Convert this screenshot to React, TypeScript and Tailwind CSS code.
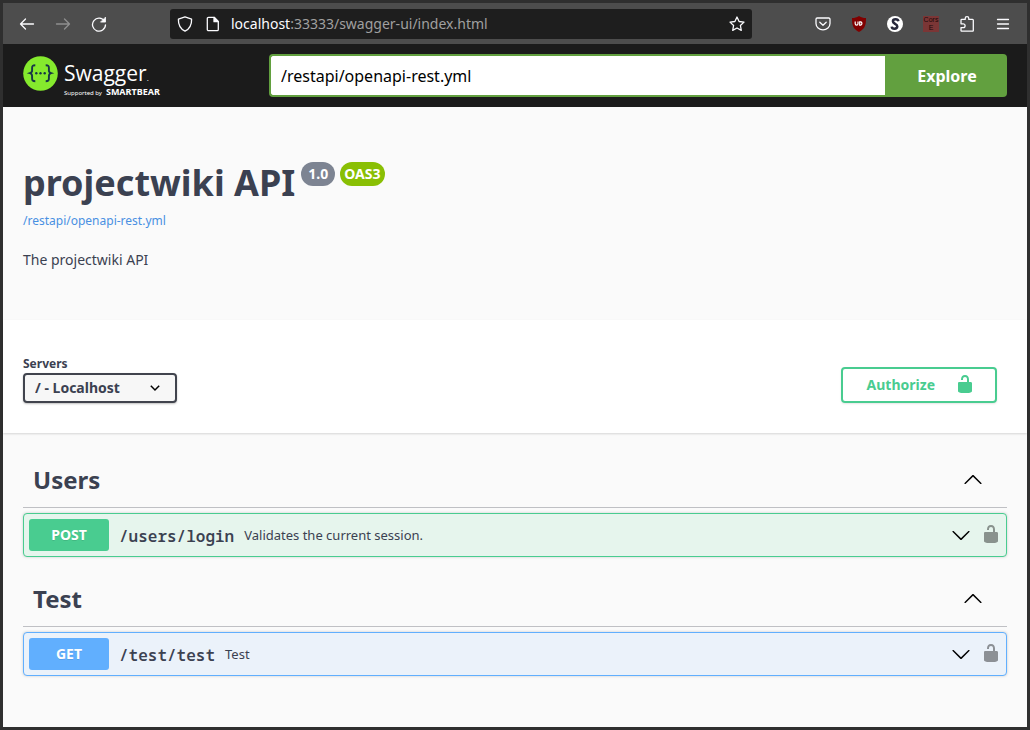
import type { ReactNode } from 'react';

const paths = {
  unlocked:
    'M15.8 8H14V5.6C14 2.703 12.665 1 10 1 7.334 1 6 2.703 6 5.6V6h2v-.801C8 3.754 8.797 3 10 3c1.203 0 2 .754 2 2.199V8H4c-.553 0-1 .646-1 1.199V17c0 .549.428 1.139.951 1.307l1.197.387C5.672 18.861 6.55 19 7.1 19h5.8c.549 0 1.428-.139 1.951-.307l1.196-.387c.524-.167.953-.757.953-1.306V9.199C17 8.646 16.352 8 15.8 8z',
  up: 'M17.418 14.908c.272.268.709.268.979 0s.271-.701 0-.969l-7.908-7.83c-.27-.268-.707-.268-.979 0l-7.908 7.83c-.27.268-.27.701 0 .969.271.268.709.268.979 0L10 7.767l7.418 7.141z',
  down: 'M17.418 6.109c.272-.268.709-.268.979 0s.271.701 0 .969l-7.908 7.83c-.27.268-.707.268-.979 0l-7.908-7.83c-.27-.268-.27-.701 0-.969.271-.268.709-.268.979 0L10 13.25l7.418-7.141z',
};

function Glyph({ d, className = '' }: { d: string; className?: string }) {
  return (
    <svg viewBox="0 0 20 20" className={`size-5 shrink-0 ${className}`} fill="currentColor" aria-hidden="true">
      <path d={d} />
    </svg>
  );
}

function ToolButton({ label, dim, children }: { label: string; dim?: boolean; children: ReactNode }) {
  return (
    <button
      type="button"
      aria-label={label}
      className={`flex size-9 items-center justify-center ${dim ? 'text-[#8f8f8f]' : 'text-[#fbfbfe]'}`}
    >
      {children}
    </button>
  );
}

function Line({ children }: { children: ReactNode }) {
  return (
    <svg
      viewBox="0 0 16 16"
      className="size-4 shrink-0"
      fill="none"
      stroke="currentColor"
      strokeWidth="1.3"
      strokeLinecap="round"
      strokeLinejoin="round"
      aria-hidden="true"
    >
      {children}
    </svg>
  );
}

function BrowserBar() {
  return (
    <header className="flex h-[41px] items-center bg-[#4d4d4d] px-1.5">
      <nav className="flex">
        <ToolButton label="Back">
          <Line>
            <path d="M14.5 8H1.5M6.5 3 1.5 8l5 5" />
          </Line>
        </ToolButton>
        <ToolButton label="Forward" dim>
          <Line>
            <path d="M1.5 8h13M9.500 3l5 5-5 5" />
          </Line>
        </ToolButton>
        <ToolButton label="Reload">
          <Line>
            <path d="M13.500 5.200A6.500 6.500 0 1 0 14.500 8.800" />
            <path d="M14.500 1.500v4.600H9.900z" fill="currentColor" strokeWidth="0.800" />
          </Line>
        </ToolButton>
      </nav>
      <div className="mx-[53px] flex h-[30px] min-w-0 flex-1 items-center rounded-[3px] bg-[#1e1e1e] px-[7px] text-[#fbfbfe]">
        <Line>
          <path d="M8 .8 14.600 3.200C14.800 8.500 13 12.600 8 15.200 3 12.600 1.200 8.500 1.400 3.200z" />
        </Line>
        <span className="ml-3 flex">
          <Line>
            <path d="M3.500 1.300h5.700l4.100 4.100v8.100a1.200 1.200 0 0 1-1.200 1.200H3.500a1.200 1.200 0 0 1-1.200-1.200v-11a1.200 1.200 0 0 1 1.200-1.200z" />
            <path d="M9 1.500v4.200h4.200z" fill="currentColor" />
          </Line>
        </span>
        <div className="ml-2.5 min-w-0 flex-1 text-[14px] leading-5 whitespace-nowrap text-[#a0a0a0]">
          <span className="text-[#fbfbfe]">localhost</span>:33333/swagger-ui/index.html
        </div>
        <button type="button" aria-label="Bookmark">
          <Line>
            <path d="m8 1 2.100 4.500 4.900.6-3.600 3.400.9 4.900L8 12l-4.300 2.400.9-4.900L1 6.100l4.900-.6z" />
          </Line>
        </button>
      </div>
      <div className="flex">
        <ToolButton label="Pocket">
          <Line>
            <path d="M2.200 2h11.600a1.200 1.200 0 0 1 1.200 1.200V7.500a7 6.300 0 0 1-14 0V3.200A1.200 1.200 0 0 1 2.200 2z" />
            <path d="m4.800 6.200 3.200 3 3.200-3" />
          </Line>
        </ToolButton>
        <ToolButton label="uBlock">
          <svg viewBox="0 0 16 16" className="size-4" aria-hidden="true">
            <path d="M8 0c2.500 1.600 4.200 2 7 2 0 7-.7 10.500-7 14C1.700 12.500 1 9 1 2c2.800 0 4.500-.4 7-2z" fill="#800000" />
            <path
              d="M4.200 5.400v2.300a1.400 1.400 0 0 0 2.800 0V5.400M8.700 5.900h1.100a1.700 1.700 0 0 1 0 3.200H8.700z"
              fill="none"
              stroke="#fff"
              strokeWidth="1.200"
            />
          </svg>
        </ToolButton>
        <ToolButton label="Stylus">
          <svg viewBox="0 0 16 16" className="size-4" aria-hidden="true">
            <circle cx="8" cy="8" r="8" fill="#fff" />
            <path
              d="M11.400 5.200C11 2.600 6 2.600 5.900 5.300 5.800 7.900 10.400 7.700 10.300 10.400 10.100 13.400 5 13.400 4.700 10.600"
              fill="none"
              stroke="#27283c"
              strokeWidth="2.500"
            />
          </svg>
        </ToolButton>
        <ToolButton label="Cors">
          <span className="flex size-4 flex-col items-center justify-center bg-[#7b3636] font-['Liberation_Sans',sans-serif] text-[7px] leading-[8px] text-[#1c0808]">
            <span>Cors</span>
            <span>E</span>
          </span>
        </ToolButton>
        <ToolButton label="Extensions">
          <Line>
            <path d="M2 6.800V4.200a.8.8 0 0 1 .8-.8H6.200V2.500a1.800 1.800 0 0 1 3.600 0v.9h3.700a.8.8 0 0 1 .8.8v10.200a.8.8 0 0 1-.8.800H2.800a.8.8 0 0 1-.8-.8v-2.800h2.200a1.900 1.900 0 0 0 0-3.800H2z" />
          </Line>
        </ToolButton>
        <ToolButton label="Menu">
          <Line>
            <path d="M2.500 3.500h11M2.500 8h11M2.500 12.500h11" />
          </Line>
        </ToolButton>
      </div>
    </header>
  );
}

function Logo() {
  return (
    <a href="#" className="flex h-full flex-1 items-start gap-1.5 pt-3 text-white">
      <svg viewBox="0 0 35 35" className="size-[35px] shrink-0" aria-hidden="true">
        <circle cx="17.500" cy="17.500" r="17.300" fill="#85ea2d" />
        <g fill="none" stroke="#173647" strokeWidth="1.900">
          <path d="M12.300 9.200c-2.600 0-3.300.7-3.200 3 .1 3 .1 4.300-2.200 5 2.300.7 2.300 2 2.200 5-.1 2.300.6 3 3.200 3" />
          <path d="M22.700 9.200c2.600 0 3.300.7 3.200 3-.1 3-.1 4.300 2.200 5-2.300.7-2.300 2-2.200 5 .1 2.300-.6 3-3.200 3" />
        </g>
        <g fill="#173647">
          <circle cx="13.300" cy="17.200" r="1.200" />
          <circle cx="17.500" cy="17.200" r="1.200" />
          <circle cx="21.700" cy="17.200" r="1.200" />
        </g>
      </svg>
      <span className="flex flex-col">
        <span className="font-['Open_Sans',sans-serif] text-[21px] leading-[34px]">
          Swagger<span className="text-[8px]">.</span>
        </span>
        <span className="-mt-[7px] flex items-baseline gap-1 text-[6px] leading-2 whitespace-nowrap">
          Supported by <span className="text-[9px] font-bold">SMARTBEAR</span>
        </span>
      </span>
    </a>
  );
}

function TopBar() {
  return (
    <div className="flex h-[63px] items-center bg-[#1b1b1b] px-5">
      <Logo />
      <form className="flex h-[43px] flex-3" onSubmit={(e) => e.preventDefault()}>
        <input
          type="text"
          aria-label="Specification"
          defaultValue="/restapi/openapi-rest.yml"
          className="min-w-0 flex-1 rounded-l-[4px] border-2 border-r-0 border-[#62a03f] bg-white px-2.5 text-[16px] text-black outline-none"
        />
        <button type="submit" className="w-[122px] rounded-r-[4px] bg-[#62a03f] pl-0.5 text-[16px] font-bold text-white">
          Explore
        </button>
      </form>
    </div>
  );
}

function Info() {
  return (
    <section className="px-5 pt-[50px] pb-[50px]">
      <div className="flex items-start gap-[5px]">
        <h1 className="mr-px text-[36px] leading-[52px] font-bold">projectwiki API</h1>
        <span className="mt-[5px] rounded-full bg-[#7d8492] px-[7px] text-[14px] leading-6 font-bold text-white">1.0</span>
        <span className="mt-[5px] rounded-full bg-[#89bf04] px-1 text-[14px] leading-6 font-bold text-white">OAS3</span>
      </div>
      <a href="#" className="block text-[12px] leading-6 text-[#4990e2]">
        /restapi/openapi-rest.yml
      </a>
      <p className="mt-[17px] text-[14px] leading-5">The projectwiki API</p>
    </section>
  );
}

function Schemes() {
  return (
    <section className="flex h-[113px] items-center justify-between bg-white pr-[30px] pl-5 shadow-[0_1px_2px_rgba(0,0,0,0.15)]">
      <div className="pt-1">
        <label htmlFor="servers" className="block text-[12px] leading-[18px] font-bold">
          Servers
        </label>
        <div className="relative">
          <select
            id="servers"
            className="block h-[30px] w-[154px] appearance-none rounded-[4px] border-2 border-[#41444e] bg-[#f7f7f7] px-2.5 text-[14px] font-bold shadow-[0_1px_2px_rgba(0,0,0,0.25)]"
          >
            <option>/ - Localhost</option>
          </select>
          <svg
            viewBox="0 0 10 10"
            className="pointer-events-none absolute top-2.5 right-[17px] size-2.5"
            fill="none"
            stroke="#000"
            strokeWidth="1.500"
            aria-hidden="true"
          >
            <path d="m.800 2.800 4.200 4.200 4.200-4.200" />
          </svg>
        </div>
      </div>
      <button
        type="button"
        className="mt-4 flex h-9 items-center gap-5 rounded-[4px] border-2 border-[#49cc90] pr-5 pl-6 text-[14px] font-bold text-[#49cc90] shadow-[0_1px_2px_rgba(0,0,0,0.1)]"
      >
        Authorize
        <Glyph d={paths.unlocked} className="mb-0.5" />
      </button>
    </section>
  );
}

type Operation = { tag: string; method: 'POST' | 'GET'; path: string; summary: string };

const operations: Operation[] = [
  { tag: 'Users', method: 'POST', path: '/users/login', summary: 'Validates the current session.' },
  { tag: 'Test', method: 'GET', path: '/test/test', summary: 'Test' },
];

const tones = {
  POST: { row: 'border-[#49cc90] bg-[#e6f5ed]', badge: 'bg-[#49cc90]' },
  GET: { row: 'border-[#61affe] bg-[#ebf2fa]', badge: 'bg-[#61affe]' },
};

function TagSection({ tag, method, path, summary }: Operation) {
  const tone = tones[method];
  return (
    <section className="mb-[15px]">
      <div className="mb-[5px] flex h-[55px] items-center justify-between border-b border-[#bfc0c4] pr-6 pl-2.5">
        <h2 className="text-[24px] leading-8 font-bold">{tag}</h2>
        <button type="button" aria-label={`Collapse ${tag}`} className="pb-0.5 text-black">
          <Glyph d={paths.up} />
        </button>
      </div>
      <div className={`flex h-11 items-center rounded-[4px] border px-[5px] shadow-[0_0_3px_rgba(0,0,0,0.19)] ${tone.row}`}>
        <span
          className={`w-20 rounded-[3px] text-center text-[14px] leading-8 font-bold text-white [text-shadow:0_1px_0_rgba(0,0,0,0.1)] ${tone.badge}`}
        >
          {method}
        </span>
        <a href="#" className="ml-2.5 pt-0.5 font-['Noto_Sans_Mono','DejaVu_Sans_Mono',monospace] text-[16px] leading-6 font-semibold">
          {path}
        </a>
        <span className="ml-2.5 flex-1 text-[13px] leading-5">{summary}</span>
        <button type="button" aria-label={`Expand ${path}`} className="text-black">
          <Glyph d={paths.down} />
        </button>
        <button type="button" aria-label={`Authorize ${path}`} className="ml-2.5 pb-0.5 text-black opacity-40">
          <Glyph d={paths.unlocked} />
        </button>
      </div>
    </section>
  );
}

export default function App() {
  return (
    <div className="flex min-h-screen flex-col border-3 border-[#2f2f2f] bg-[#fafafa] font-['Noto_Sans',sans-serif] text-[#3b4151]">
      <BrowserBar />
      <TopBar />
      <main>
        <Info />
        <Schemes />
        <div className="px-5 pt-5">
          {operations.map((op) => (
            <TagSection key={op.path} {...op} />
          ))}
        </div>
      </main>
    </div>
  );
}
